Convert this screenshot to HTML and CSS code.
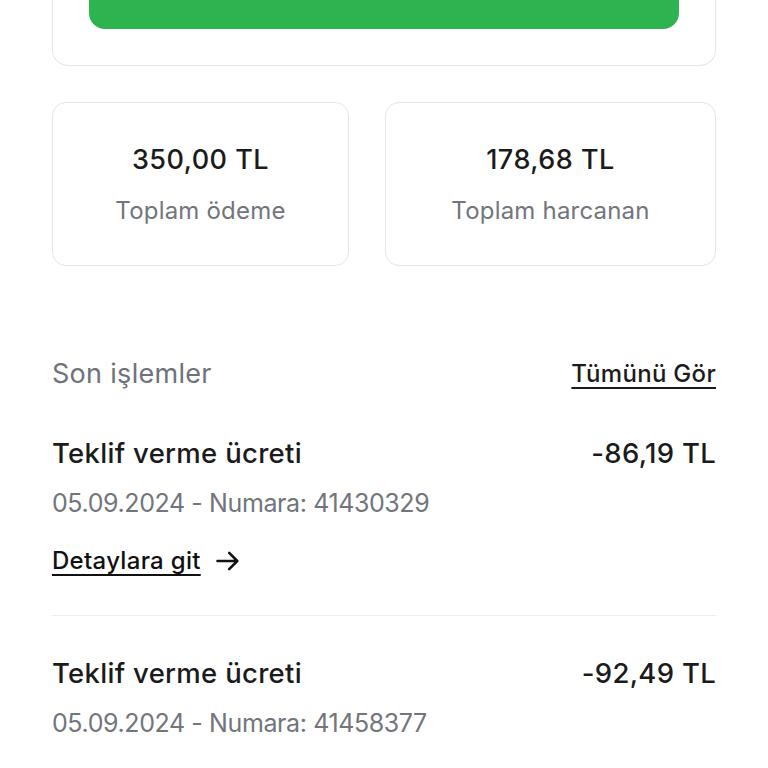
FILE: index.html
```html
<!DOCTYPE html>
<html lang="tr">
<head>
    <meta charset="UTF-8">
    <meta name="viewport" content="width=device-width, initial-scale=1.0">
    <title>Cüzdan</title>
    <link rel="stylesheet" href="styles.css">
</head>
<body>
    <div class="page">
        <div class="top-card">
            <button class="green-btn"></button>
        </div>

        <div class="stats">
            <div class="stat-card">
                <div class="stat-value">350,00 TL</div>
                <div class="stat-label">Toplam ödeme</div>
            </div>
            <div class="stat-card">
                <div class="stat-value">178,68 TL</div>
                <div class="stat-label">Toplam harcanan</div>
            </div>
        </div>

        <div class="section-head">
            <h2>Son işlemler</h2>
            <a href="#" class="see-all">Tümünü Gör</a>
        </div>

        <div class="tx">
            <div class="tx-row">
                <span class="tx-title">Teklif verme ücreti</span>
                <span class="tx-amount">-86,19 TL</span>
            </div>
            <div class="tx-meta">05.09.2024 - Numara: 41430329</div>
            <a href="#" class="tx-link"><span>Detaylara git</span>
                <svg width="28" height="28" viewBox="0 0 24 24" fill="none" stroke="#111" stroke-width="2.2" stroke-linecap="round" stroke-linejoin="round"><path d="M3 12h17M13 5l7 7-7 7"/></svg>
            </a>
        </div>

        <div class="tx">
            <div class="tx-row">
                <span class="tx-title">Teklif verme ücreti</span>
                <span class="tx-amount">-92,49 TL</span>
            </div>
            <div class="tx-meta">05.09.2024 - Numara: 41458377</div>
            <a href="#" class="tx-link"><span>Detaylara git</span>
                <svg width="28" height="28" viewBox="0 0 24 24" fill="none" stroke="#111" stroke-width="2.2" stroke-linecap="round" stroke-linejoin="round"><path d="M3 12h17M13 5l7 7-7 7"/></svg>
            </a>
        </div>
    </div>
</body>
</html>
```

FILE: styles.css
```css
body {
    margin: 0;
    height: 768px;
    background: #fff;
    font-family: Inter, "Noto Sans", sans-serif;
    color: #1b1b1b;
    overflow: hidden;
}
.page {
    padding: 0 52px;
    margin-top: -36px;
}
.top-card {
    border: 1.5px solid #e6e6e6;
    border-top: none;
    border-radius: 0 0 16px 16px;
    padding: 0 36px 36px;
}
.green-btn {
    display: block;
    width: 100%;
    height: 65px;
    border: none;
    border-radius: 0 0 16px 16px;
    background-color: #2db34f;
}
.stats {
    display: grid;
    grid-template-columns: 297fr 331fr;
    gap: 36px;
    margin-top: 36px;
}
.stat-card {
    height: 164px;
    box-sizing: border-box;
    border: 1.5px solid #e6e6e6;
    border-radius: 14px;
    display: flex;
    flex-direction: column;
    align-items: center;
    justify-content: center;
    gap: 19px;
}
.stat-value {
    font-size: 27px;
    line-height: 34px;
    font-weight: 500;
    letter-spacing: 0.5px;
}
.stat-label {
    font-size: 24px;
    line-height: 30px;
    letter-spacing: 0.2px;
    color: #72757c;
}
.section-head {
    display: flex;
    justify-content: space-between;
    align-items: center;
    margin-top: 91px;
    margin-bottom: 5px;
}
.section-head h2 {
    margin: 0;
    font-size: 27px;
    line-height: 34px;
    font-weight: 400;
    letter-spacing: 0.3px;
    color: #6f727a;
}
.see-all {
    font-size: 24px;
    line-height: 30px;
    font-weight: 500;
    letter-spacing: 0.3px;
    color: #1b1b1b;
    text-decoration: underline;
    text-decoration-thickness: 1.5px;
    text-underline-offset: 5px;
}
.tx {
    padding: 40px 0 39px;
    border-bottom: 1.5px solid #ececec;
}
.tx-row {
    display: flex;
    justify-content: space-between;
    font-size: 27.5px;
    line-height: 34px;
    font-weight: 500;
    letter-spacing: 0.3px;
}
.tx-meta {
    margin-top: 18px;
    font-size: 25px;
    line-height: 30px;
    letter-spacing: -0.4px;
    color: #72757c;
}
.tx-link {
    display: inline-flex;
    align-items: center;
    gap: 13px;
    margin-top: 28px;
    font-size: 24px;
    line-height: 30px;
    font-weight: 500;
    letter-spacing: 0.3px;
    color: #111;
    text-decoration: none;
}
.tx-link span {
    text-decoration: underline;
    text-decoration-thickness: 1.5px;
    text-underline-offset: 5px;
}
```
